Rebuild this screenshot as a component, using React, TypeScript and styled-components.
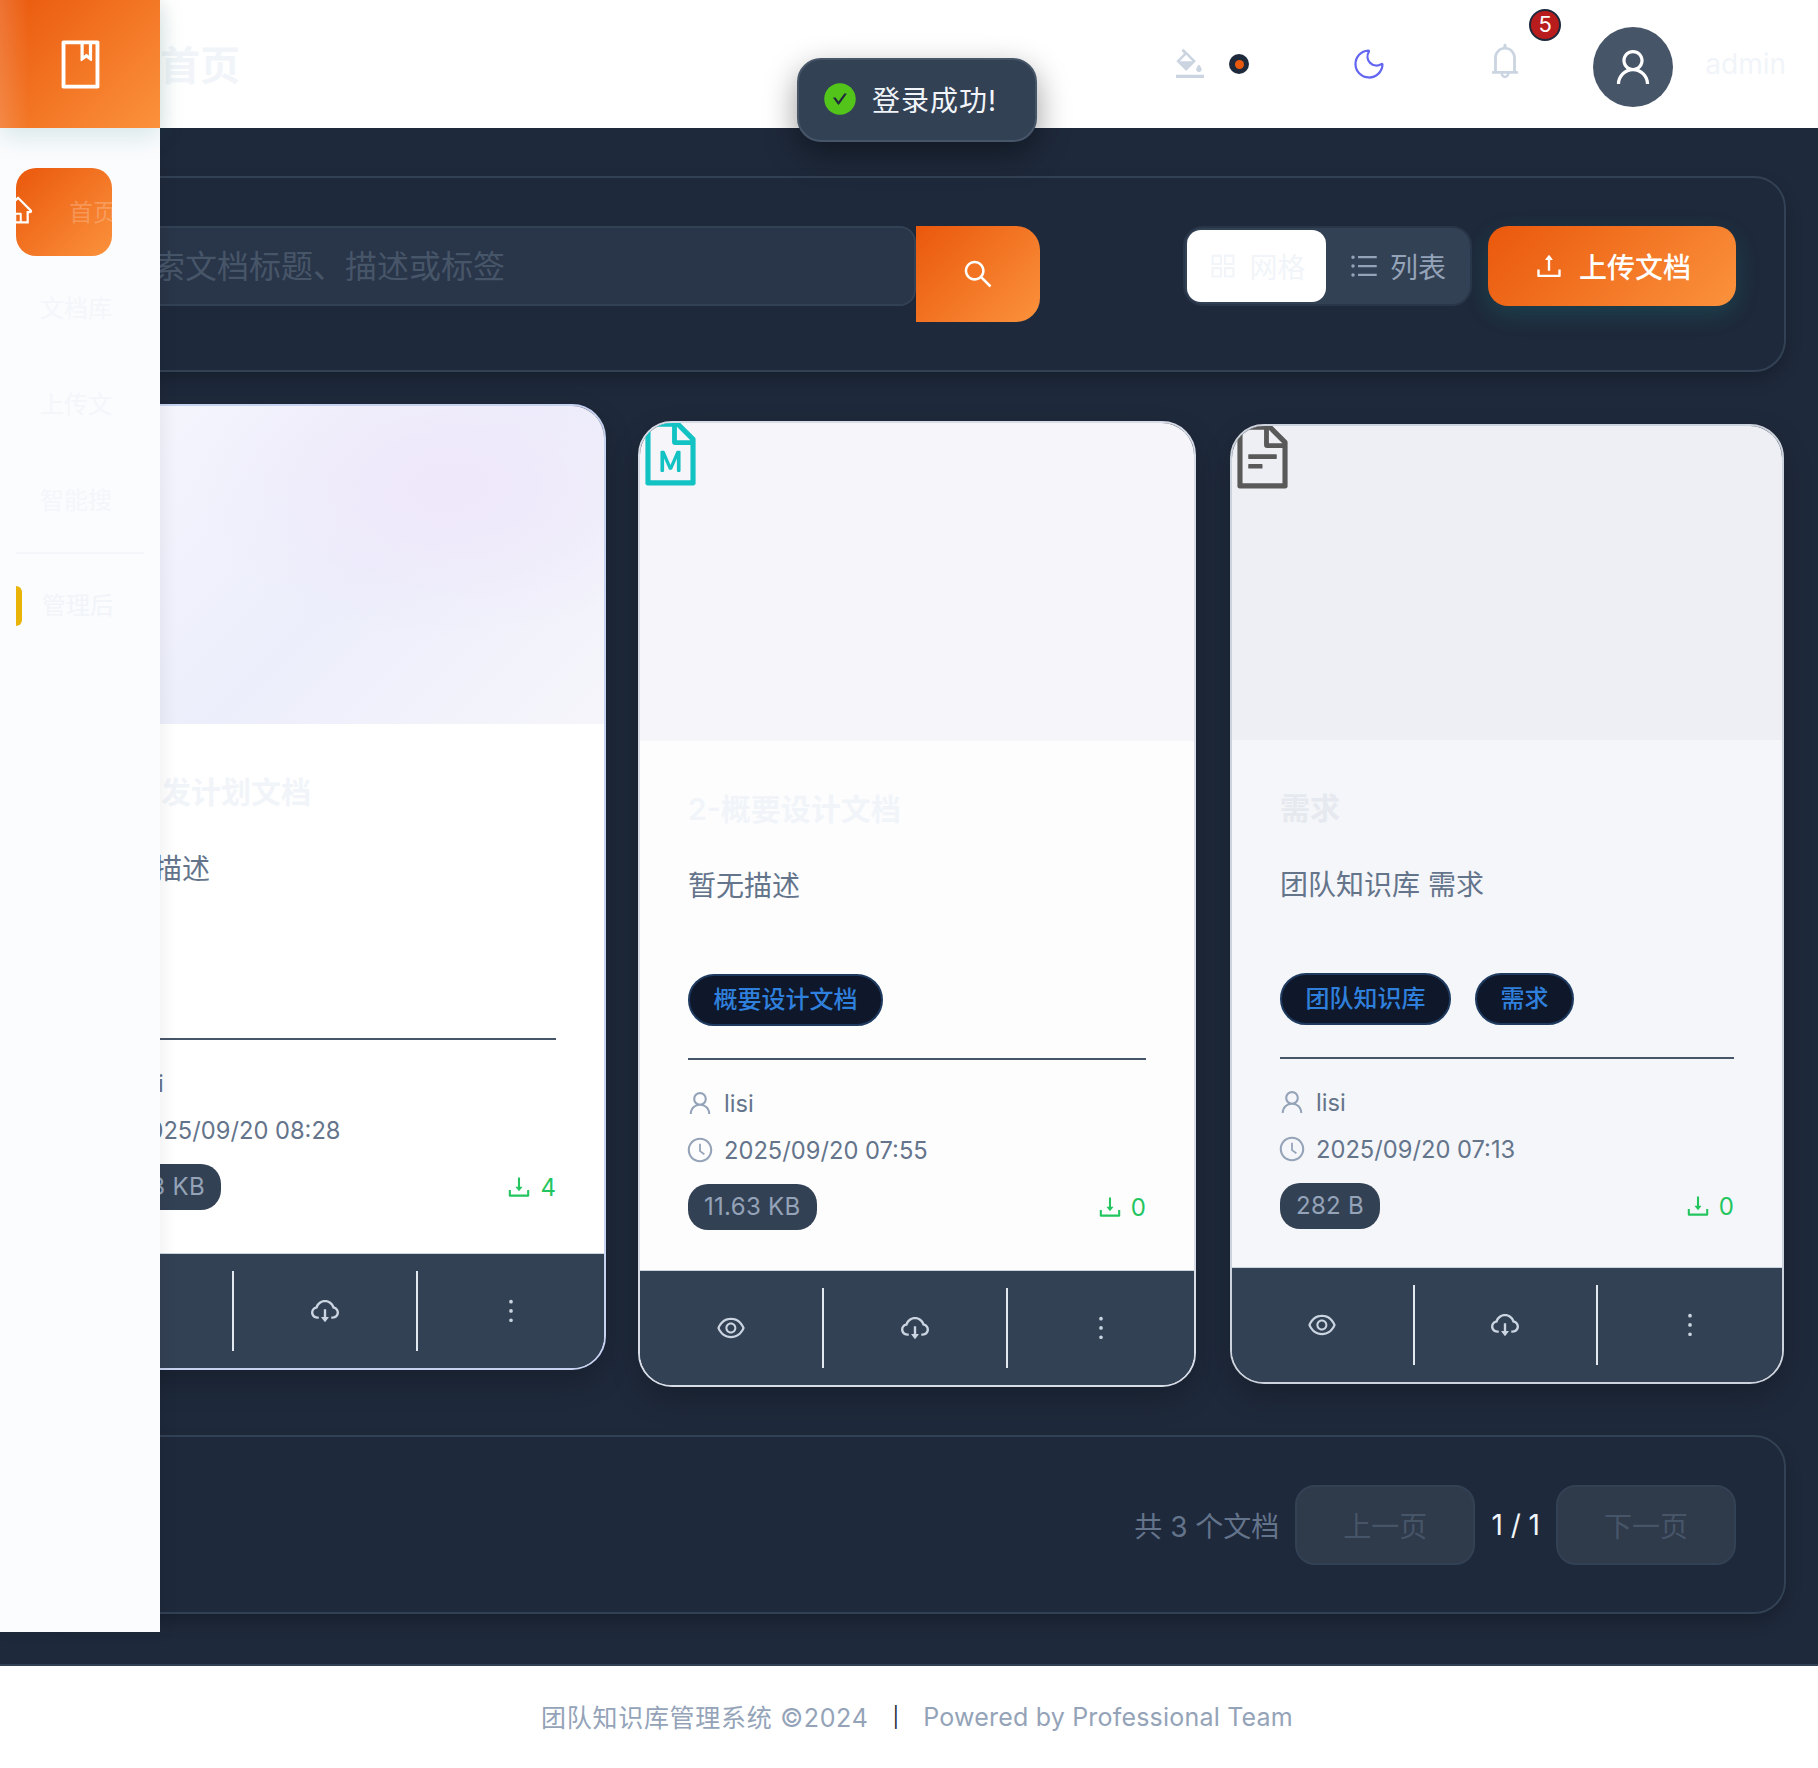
import React from 'react';
import styled, { createGlobalStyle } from 'styled-components';
import {
  AiOutlineBook,
  AiOutlineHome,
  AiOutlineBgColors,
  AiOutlineBell,
  AiOutlineUser,
  AiFillCheckCircle,
  AiOutlineSearch,
  AiOutlineAppstore,
  AiOutlineUnorderedList,
  AiOutlineUpload,
  AiOutlineFileMarkdown,
  AiOutlineFileText,
  AiOutlineClockCircle,
  AiOutlineDownload,
  AiOutlineEye,
  AiOutlineCloudDownload,
  AiOutlineMore,
} from 'react-icons/ai';
import { Moon } from 'lucide-react';

const GlobalStyle = createGlobalStyle`
  html, body {
    margin: 0;
    padding: 0;
    background: #1e293b;
    font-family: Inter, "Noto Sans CJK SC", sans-serif;
  }
  * { box-sizing: border-box; }
`;

const orange = 'linear-gradient(135deg, #ea580c 0%, #fb923c 100%)';

const Page = styled.div`
  position: relative;
  width: 1818px;
  height: 1768px;
  overflow: hidden;
  display: flex;
  flex-direction: column;
`;

const Sidebar = styled.aside`
  position: absolute;
  left: 0;
  top: 0;
  z-index: 5;
  width: 160px;
  height: 1632px;
  background: #fbfcfe;
  box-shadow: 4px 0 16px rgba(0, 0, 0, 0.06);
`;

const Logo = styled.div`
  height: 128px;
  display: flex;
  align-items: center;
  justify-content: center;
  background: linear-gradient(90deg, rgba(255, 255, 255, 0.16), transparent 18%), ${orange};
  color: #fff;
  box-shadow: 0 8px 24px rgba(20, 120, 110, 0.16);
`;

const Menu = styled.nav`
  padding: 40px 16px 0;
  display: flex;
  flex-direction: column;
  gap: 8px;
`;

const MenuItem = styled.div<{ $active?: boolean }>`
  width: 96px;
  height: 88px;
  display: flex;
  align-items: center;
  flex: none;
  overflow: hidden;
  white-space: nowrap;
  font-size: 24px;
  border-radius: 20px;
  padding: 0 0 4px ${(p) => (p.$active ? 0 : 24)}px;
  color: ${(p) => (p.$active ? 'rgba(255, 255, 255, 0.22)' : '#f3f6fa')};
  background: ${(p) => (p.$active ? orange : 'transparent')};
  svg {
    flex: none;
    margin-left: -14px;
    margin-right: 35px;
    color: #fff;
  }
`;

const MenuDivider = styled.div`
  height: 2px;
  width: 128px;
  background: #f4f6fa;
`;

const FlagItem = styled.div`
  width: 96px;
  height: 88px;
  display: flex;
  align-items: center;
  gap: 20px;
  overflow: hidden;
  white-space: nowrap;
  font-size: 24px;
  color: #f1f4f9;
`;

const FlagBar = styled.span`
  flex: none;
  width: 6px;
  height: 40px;
  background: #eab308;
  border-radius: 0 6px 6px 0;
`;

const FlagText = styled.span`
  padding-bottom: 6px;
`;

const Header = styled.header`
  height: 128px;
  flex: none;
  background: #fff;
  display: flex;
  align-items: center;
  justify-content: space-between;
  padding: 0 32px 0 160px;
`;

const PageTitle = styled.h1`
  margin: 0 0 2px;
  font-size: 40px;
  font-weight: 600;
  color: #f1f5f9;
`;

const HeaderTools = styled.div`
  display: flex;
  align-items: center;
`;

const ThemeDot = styled.span`
  width: 20px;
  height: 20px;
  margin: 0 102px 0 21px;
  border-radius: 50%;
  background: #1e293b;
  display: flex;
  align-items: center;
  justify-content: center;
  &::after {
    content: '';
    width: 9px;
    height: 9px;
    border-radius: 50%;
    background: #ea580c;
  }
`;

const BellWrap = styled.div`
  position: relative;
  display: flex;
  margin: -6px 68px 0 98px;
  color: #cbd5e1;
`;

const Badge = styled.span`
  position: absolute;
  left: 44px;
  top: -32px;
  width: 32px;
  height: 32px;
  border-radius: 50%;
  background: #b91c1c;
  border: 2px solid #1e293b;
  color: #fff;
  font-size: 22px;
  line-height: 27px;
  text-align: center;
`;

const Avatar = styled.div`
  width: 80px;
  height: 80px;
  margin-top: 6px;
  border-radius: 50%;
  background: #475569;
  color: #fff;
  display: flex;
  align-items: center;
  justify-content: center;
`;

const UserName = styled.span`
  margin-left: 32px;
  font-size: 28px;
  color: #f1f5f9;
`;

const Toast = styled.div`
  position: absolute;
  left: 797px;
  top: 58px;
  z-index: 10;
  width: 240px;
  height: 84px;
  padding: 0 0 2px 23px;
  display: flex;
  align-items: center;
  gap: 14px;
  background: #334155;
  border: 2px solid #475569;
  border-radius: 24px;
  color: #f1f5f9;
  font-size: 28px;
  letter-spacing: 1px;
  box-shadow: 0 12px 32px rgba(0, 0, 0, 0.4);
  svg {
    color: #52c41a;
    background: radial-gradient(circle, #1e293b 0 38%, transparent 39%);
    border-radius: 50%;
  }
`;

const Main = styled.main`
  height: 1536px;
  flex: none;
  background: #1e293b;
  padding: 48px 32px 0;
`;

const Panel = styled.section`
  background: #1e293b;
  border: 2px solid #334155;
  border-radius: 32px;
  padding: 48px;
  box-shadow: 0 8px 16px rgba(0, 0, 0, 0.22);
`;

const Toolbar = styled(Panel)`
  display: flex;
  align-items: flex-start;
  justify-content: space-between;
`;

const SearchGroup = styled.div`
  display: flex;
  align-items: flex-start;
`;

const SearchInput = styled.input`
  width: 834px;
  height: 80px;
  padding: 0 0 0 37px;
  background: #293548;
  border: 2px solid #334155;
  border-radius: 16px;
  font: inherit;
  font-size: 32px;
  outline: none;
  color: #f1f5f9;
  &::placeholder {
    color: #475569;
    opacity: 1;
  }
`;

const SearchButton = styled.button`
  width: 124px;
  height: 96px;
  padding: 0;
  border: 0;
  border-radius: 0 24px 24px 0;
  background: ${orange};
  color: #fff;
  display: flex;
  align-items: center;
  justify-content: center;
`;

const ToolbarRight = styled.div`
  display: flex;
  align-items: center;
  gap: 16px;
`;

const ViewToggle = styled.div`
  width: 289px;
  height: 80px;
  padding: 2px;
  display: flex;
  background: #334155;
  border: 2px solid #293548;
  border-radius: 20px;
`;

const ViewOption = styled.div<{ $active?: boolean }>`
  flex: ${(p) => (p.$active ? '0 0 139px' : '1')};
  display: flex;
  align-items: center;
  justify-content: center;
  gap: 10px;
  font-size: 28px;
  border-radius: 14px;
  background: ${(p) => (p.$active ? '#fff' : 'transparent')};
  color: ${(p) => (p.$active ? '#f1f5f9' : '#94a3b8')};
`;

const UploadButton = styled.button`
  width: 248px;
  height: 80px;
  border: 0;
  border-radius: 20px;
  background: ${orange};
  color: #fff;
  font: inherit;
  font-size: 28px;
  font-weight: 500;
  display: flex;
  align-items: center;
  justify-content: center;
  gap: 14px;
  box-shadow: 0 8px 24px rgba(20, 184, 166, 0.18);
`;

const CardRow = styled.div`
  display: flex;
  align-items: flex-start;
  height: 1063px;
  padding-top: 32px;
`;

const Card = styled.article<{ $left: number; $top: number; $width: number; $line: string }>`
  flex: none;
  width: ${(p) => p.$width}px;
  margin-left: ${(p) => p.$left}px;
  margin-top: ${(p) => p.$top}px;
  border: 2px solid ${(p) => p.$line};
  border-radius: 34px;
  overflow: hidden;
  box-shadow: 0 12px 28px rgba(0, 0, 0, 0.22);
`;

const Preview = styled.div<{ $height: number; $bg: string }>`
  height: ${(p) => p.$height}px;
  background: ${(p) => p.$bg};
  line-height: 0;
  svg {
    margin: -6px 0 0 -6px;
  }
`;

const CardBody = styled.div<{ $bg: string; $bottom: number }>`
  background: ${(p) => p.$bg};
  padding: 48px 48px ${(p) => p.$bottom}px;
`;

const CardTitle = styled.h3<{ $color: string }>`
  margin: 0 0 35px;
  font-size: 30px;
  line-height: 40px;
  font-weight: 600;
  color: ${(p) => p.$color};
`;

const CardDesc = styled.p`
  margin: 0 0 22px;
  height: 88px;
  font-size: 28px;
  line-height: 44px;
  color: #64748b;
`;

const TagRow = styled.div<{ $height: number }>`
  display: flex;
  gap: 24px;
  height: ${(p) => p.$height}px;
  margin-bottom: 32px;
`;

const Tag = styled.span`
  height: 52px;
  padding: 0 23.5px;
  border-radius: 26px;
  background: #0f172a;
  border: 2px solid #1e3a5f;
  color: #2f80dd;
  font-size: 24px;
  font-weight: 500;
  line-height: 47px;
`;

const Meta = styled.div`
  border-top: 2px solid #475569;
  padding-top: 25px;
`;

const MetaLine = styled.div`
  height: 36px;
  margin-bottom: 11px;
  display: flex;
  align-items: center;
  gap: 10px;
  font-size: 23.7px;
  color: #64748b;
  svg {
    color: #94a3b8;
    flex: none;
    margin-left: -2px;
  }
`;

const MetaBottom = styled.div`
  margin-top: 16px;
  display: flex;
  align-items: center;
  justify-content: space-between;
`;

const SizePill = styled.span`
  height: 46px;
  padding: 0 16px;
  border-radius: 20px;
  background: #334155;
  color: #94a3b8;
  font-size: 24px;
  letter-spacing: 0.3px;
  line-height: 46px;
`;

const Downloads = styled.span`
  display: flex;
  align-items: center;
  gap: 7px;
  color: #22c55e;
  font-size: 24px;
`;

const CardActions = styled.div`
  height: 115px;
  padding: 17px 0;
  display: flex;
  background: #334155;
  border-top: 1px solid #cbd5e1;
`;

const ActionCell = styled.div`
  flex: 1;
  display: flex;
  align-items: center;
  justify-content: center;
  color: #cbd5e1;
  & + & {
    border-left: 2px solid #e2e8f0;
  }
  &:last-child {
    flex: 1.02;
  }
`;

const Pagination = styled(Panel)`
  height: 179px;
  display: flex;
  align-items: center;
  justify-content: flex-end;
  gap: 16px;
  font-size: 28px;
`;

const TotalText = styled.span`
  color: #64748b;
`;

const PageButton = styled.button`
  width: 180px;
  height: 80px;
  border: 2px solid #334155;
  border-radius: 20px;
  background: #2f3a4b;
  color: #475569;
  font: inherit;
  font-size: 28px;
`;

const PageNumber = styled.span`
  color: #f1f5f9;
`;

const Footer = styled.footer`
  flex: 1;
  background: #fff;
  border-top: 2px solid #334155;
  padding-left: 16px;
  display: flex;
  align-items: center;
  justify-content: center;
  gap: 24px;
  font-size: 25px;
  color: #94a3b8;
`;

const FooterCopy = styled.span`
  letter-spacing: 0.7px;
  padding-bottom: 2px;
`;

const FooterBar = styled.span`
  color: #1e293b;
  font-size: 20px;
`;

const FooterTeam = styled.span`
  letter-spacing: 0.2px;
`;

type Doc = {
  title: string;
  titleColor: string;
  desc: string;
  tags: string[];
  time: string;
  size: string;
  downloads: number;
  left: number;
  top: number;
  width: number;
  previewHeight: number;
  previewBg: string;
  bodyBg: string;
  bodyBottom: number;
  tagHeight: number;
  line: string;
  icon: 'plain' | 'md' | 'txt';
};

const docs: Doc[] = [
  {
    title: '3-开发计划文档',
    titleColor: '#f1f5f9',
    desc: '暂无描述',
    tags: [],
    time: '2025/09/20 08:28',
    size: '8.53 KB',
    downloads: 4,
    left: 16,
    top: 0,
    width: 558,
    previewHeight: 318,
    previewBg:
      'radial-gradient(ellipse at 72% 25%, #efe7fa 0%, rgba(239, 231, 250, 0) 45%), linear-gradient(135deg, #f6f6fd 0%, #eceefb 55%, #f6f5fb 100%)',
    bodyBg: '#ffffff',
    bodyBottom: 43,
    tagHeight: 49,
    line: '#c7d2f0',
    icon: 'plain',
  },
  {
    title: '2-概要设计文档',
    titleColor: '#f1f5f9',
    desc: '暂无描述',
    tags: ['概要设计文档'],
    time: '2025/09/20 07:55',
    size: '11.63 KB',
    downloads: 0,
    left: 32,
    top: 17,
    width: 558,
    previewHeight: 318,
    previewBg: '#f5f5fa',
    bodyBg: '#fdfdfe',
    bodyBottom: 40,
    tagHeight: 52,
    line: '#d7dce6',
    icon: 'md',
  },
  {
    title: '需求',
    titleColor: '#e6e9ef',
    desc: '团队知识库 需求',
    tags: ['团队知识库', '需求'],
    time: '2025/09/20 07:13',
    size: '282 B',
    downloads: 0,
    left: 34,
    top: 20,
    width: 554,
    previewHeight: 314,
    previewBg: '#eeeff4',
    bodyBg: '#f4f6f9',
    bodyBottom: 38,
    tagHeight: 52,
    line: '#cdd3dc',
    icon: 'txt',
  },
];

const DocCard: React.FC<{ doc: Doc }> = ({ doc }) => (
  <Card $left={doc.left} $top={doc.top} $width={doc.width} $line={doc.line}>
    <Preview $height={doc.previewHeight} $bg={doc.previewBg}>
      {doc.icon === 'md' && <AiOutlineFileMarkdown size={73} color="#13c2c2" />}
      {doc.icon === 'txt' && <AiOutlineFileText size={73} color="#595959" />}
    </Preview>
    <CardBody $bg={doc.bodyBg} $bottom={doc.bodyBottom}>
      <CardTitle $color={doc.titleColor}>{doc.title}</CardTitle>
      <CardDesc>{doc.desc}</CardDesc>
      <TagRow $height={doc.tagHeight}>
        {doc.tags.map((tag) => (
          <Tag key={tag}>{tag}</Tag>
        ))}
      </TagRow>
      <Meta>
        <MetaLine>
          <AiOutlineUser size={28} />
          lisi
        </MetaLine>
        <MetaLine>
          <AiOutlineClockCircle size={28} />
          {doc.time}
        </MetaLine>
        <MetaBottom>
          <SizePill>{doc.size}</SizePill>
          <Downloads>
            <AiOutlineDownload size={28} />
            {doc.downloads}
          </Downloads>
        </MetaBottom>
      </Meta>
    </CardBody>
    <CardActions>
      <ActionCell>
        <AiOutlineEye size={32} />
      </ActionCell>
      <ActionCell>
        <AiOutlineCloudDownload size={32} />
      </ActionCell>
      <ActionCell>
        <AiOutlineMore size={34} />
      </ActionCell>
    </CardActions>
  </Card>
);

const App: React.FC = () => (
  <Page>
    <GlobalStyle />
    <Sidebar>
      <Logo>
        <AiOutlineBook size={55} />
      </Logo>
      <Menu>
        <MenuItem $active>
          <AiOutlineHome size={32} />
          首页
        </MenuItem>
        <MenuItem>文档库</MenuItem>
        <MenuItem>上传文档</MenuItem>
        <MenuItem>智能搜索</MenuItem>
        <MenuDivider />
        <FlagItem>
          <FlagBar />
          <FlagText>管理后台</FlagText>
        </FlagItem>
      </Menu>
    </Sidebar>

    <Header>
      <PageTitle>首页</PageTitle>
      <HeaderTools>
        <AiOutlineBgColors size={36} color="#cbd5e1" />
        <ThemeDot />
        <Moon size={36} color="#6366f1" strokeWidth={1.5} />
        <BellWrap>
          <AiOutlineBell size={40} />
          <Badge>5</Badge>
        </BellWrap>
        <Avatar>
          <AiOutlineUser size={44} />
        </Avatar>
        <UserName>admin</UserName>
      </HeaderTools>
    </Header>

    <Toast>
      <AiFillCheckCircle size={36} />
      登录成功!
    </Toast>

    <Main>
      <Toolbar>
        <SearchGroup>
          <SearchInput placeholder="搜索文档标题、描述或标签" readOnly />
          <SearchButton>
            <AiOutlineSearch size={34} />
          </SearchButton>
        </SearchGroup>
        <ToolbarRight>
          <ViewToggle>
            <ViewOption $active>
              <AiOutlineAppstore size={32} />
              网格
            </ViewOption>
            <ViewOption>
              <AiOutlineUnorderedList size={32} />
              列表
            </ViewOption>
          </ViewToggle>
          <UploadButton>
            <AiOutlineUpload size={32} />
            上传文档
          </UploadButton>
        </ToolbarRight>
      </Toolbar>

      <CardRow>
        {docs.map((doc) => (
          <DocCard key={doc.title} doc={doc} />
        ))}
      </CardRow>

      <Pagination>
        <TotalText>共 3 个文档</TotalText>
        <PageButton>上一页</PageButton>
        <PageNumber>1 / 1</PageNumber>
        <PageButton>下一页</PageButton>
      </Pagination>
    </Main>

    <Footer>
      <FooterCopy>团队知识库管理系统 ©2024</FooterCopy>
      <FooterBar>|</FooterBar>
      <FooterTeam>Powered by Professional Team</FooterTeam>
    </Footer>
  </Page>
);

export default App;
